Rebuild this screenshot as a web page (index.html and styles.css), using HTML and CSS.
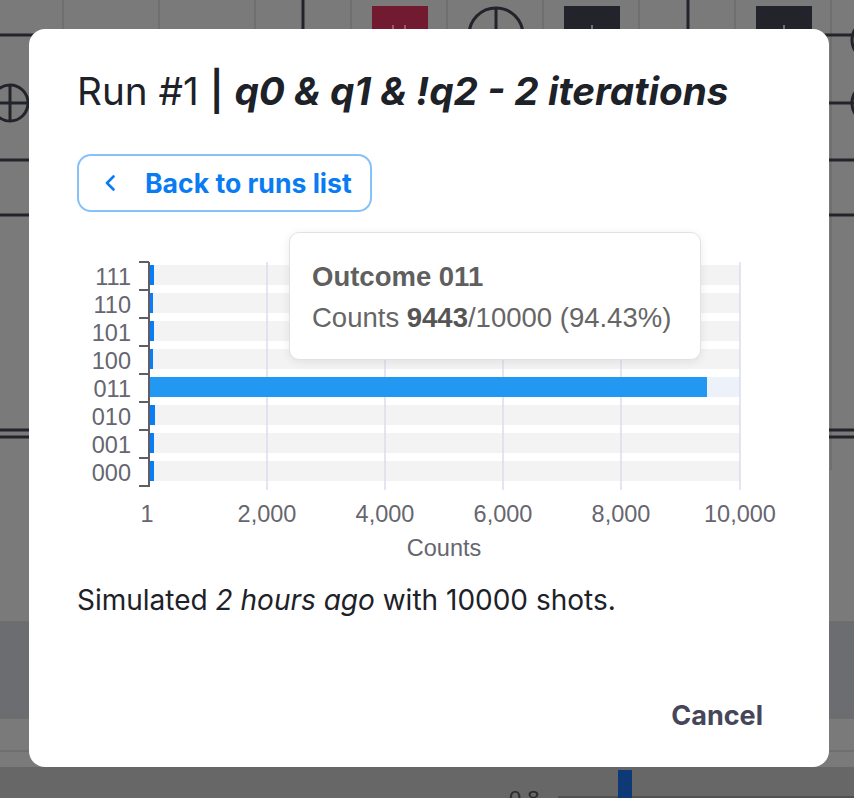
FILE: index.html
```html
<!DOCTYPE html>
<html lang="en">
<head>
<meta charset="utf-8">
<title>Run #1</title>
<link rel="stylesheet" href="styles.css">
</head>
<body>
<div class="app">
  <svg class="circuit" width="854" height="798" viewBox="0 0 854 798">
    <rect x="0" y="0" width="854" height="798" fill="#7a7a7a"/>
    <rect x="0" y="622" width="854" height="96" fill="#6b6d71"/>
    <rect x="0" y="767" width="854" height="31" fill="#676767"/>
    <g stroke="#6c6c6c" stroke-width="1.5">
      <line x1="63" y1="0" x2="63" y2="470"/><line x1="159" y1="0" x2="159" y2="470"/>
      <line x1="255" y1="0" x2="255" y2="470"/><line x1="351" y1="0" x2="351" y2="470"/>
      <line x1="447" y1="0" x2="447" y2="470"/><line x1="543" y1="0" x2="543" y2="470"/>
      <line x1="639" y1="0" x2="639" y2="470"/><line x1="735" y1="0" x2="735" y2="470"/>
      <line x1="831" y1="0" x2="831" y2="470"/>
      <line x1="0" y1="622" x2="854" y2="622"/><line x1="0" y1="718" x2="854" y2="718"/>
      <line x1="0" y1="751" x2="854" y2="751"/>
    </g>
    <g stroke="#23242b" stroke-width="3" fill="none">
      <line x1="0" y1="35" x2="854" y2="35"/>
      <line x1="0" y1="103" x2="854" y2="103"/>
      <line x1="0" y1="160" x2="854" y2="160"/>
      <line x1="0" y1="215" x2="854" y2="215"/>
      <line x1="0" y1="430" x2="854" y2="430"/>
      <line x1="0" y1="437" x2="854" y2="437"/>
      <circle cx="496" cy="35" r="27"/>
      <line x1="496" y1="8" x2="496" y2="62"/>
      <line x1="303" y1="0" x2="303" y2="35"/>
      <line x1="688" y1="0" x2="688" y2="35"/>
      <circle cx="10" cy="103" r="18"/>
      <line x1="10" y1="85" x2="10" y2="121"/>
      <circle cx="872" cy="40" r="20"/>
      <circle cx="872" cy="103" r="20"/>
    </g>
    <circle cx="303" cy="35" r="6" fill="#23242b"/>
    <circle cx="688" cy="35" r="6" fill="#23242b"/>
    <rect x="372" y="6" width="56" height="58" fill="#721b30"/>
    <rect x="564" y="6" width="56" height="58" fill="#23242b"/>
    <rect x="756" y="6" width="56" height="58" fill="#23242b"/>
    <g stroke="#9a5a6a" stroke-width="2">
      <line x1="393" y1="25" x2="393" y2="44"/><line x1="405" y1="25" x2="405" y2="44"/>
    </g>
    <g stroke="#6d6e75" stroke-width="2">
      <line x1="592" y1="25" x2="592" y2="44"/><line x1="784" y1="25" x2="784" y2="44"/>
    </g>
    <line x1="558" y1="797" x2="854" y2="797" stroke="#4a4a4a" stroke-width="1.5"/>
    <rect x="618" y="770" width="14" height="28" fill="#0d3a76"/>
    <text x="509" y="806" class="bg-label">0.8</text>
  </svg>
</div>

<div class="backdrop">
  <div class="modal">
    <h1 class="title">Run #1 <b class="pipe">|</b> <span class="title-em">q0 &amp; q1 &amp; !q2 - 2 iterations</span></h1>

    <button class="back-btn" type="button">
      <svg class="chev" width="12" height="16" viewBox="0 0 12 16"><path d="M9.5 1.5 L3 8 L9.5 14.5" fill="none" stroke="#0a7cf3" stroke-width="2.6" stroke-linecap="round" stroke-linejoin="round"/></svg>
      <span>Back to runs list</span>
    </button>

    <div class="chart">
      <svg class="chart-svg" width="704" height="340" viewBox="0 0 704 340">
        <g fill="#f3f3f3">
          <rect x="72" y="40" width="591" height="20"/>
          <rect x="72" y="68" width="591" height="20"/>
          <rect x="72" y="96" width="591" height="20"/>
          <rect x="72" y="124" width="591" height="20"/>
          <rect x="72" y="180" width="591" height="20"/>
          <rect x="72" y="208" width="591" height="20"/>
          <rect x="72" y="236" width="591" height="20"/>
        </g>
        <rect x="72" y="152" width="591" height="20" fill="#edf1f9"/>
        <g stroke="#dcdcee" stroke-width="1.5">
          <line x1="190" y1="37" x2="190" y2="265"/>
          <line x1="308" y1="37" x2="308" y2="265"/>
          <line x1="426" y1="37" x2="426" y2="265"/>
          <line x1="544" y1="37" x2="544" y2="265"/>
          <line x1="663" y1="37" x2="663" y2="265"/>
        </g>
        <g fill="#0a7cf5">
          <rect x="72" y="40" width="5" height="20"/>
          <rect x="72" y="68" width="4" height="20"/>
          <rect x="72" y="96" width="5" height="20"/>
          <rect x="72" y="124" width="4" height="20"/>
          <rect x="72" y="180" width="6" height="20"/>
          <rect x="72" y="208" width="5" height="20"/>
          <rect x="72" y="236" width="5" height="20"/>
        </g>
        <rect x="72" y="152" width="558" height="20" fill="#2398f3"/>
        <g stroke="#5e5e66" stroke-width="2">
          <line x1="72" y1="37" x2="72" y2="262"/>
          <line x1="62" y1="37" x2="72" y2="37"/><line x1="62" y1="65" x2="72" y2="65"/>
          <line x1="62" y1="93" x2="72" y2="93"/><line x1="62" y1="121" x2="72" y2="121"/>
          <line x1="62" y1="149" x2="72" y2="149"/><line x1="62" y1="177" x2="72" y2="177"/>
          <line x1="62" y1="205" x2="72" y2="205"/><line x1="62" y1="233" x2="72" y2="233"/>
          <line x1="62" y1="261" x2="72" y2="261"/>
        </g>
        <g class="ax-label" text-anchor="end">
          <text x="54" y="59.5">111</text><text x="54" y="87.5">110</text>
          <text x="54" y="115.5">101</text><text x="54" y="143.5">100</text>
          <text x="54" y="171.5">011</text><text x="54" y="199.5">010</text>
          <text x="54" y="227.5">001</text><text x="54" y="255.5">000</text>
        </g>
        <g class="ax-label" text-anchor="middle">
          <text x="70" y="297">1</text>
          <text x="190" y="297">2,000</text>
          <text x="308" y="297">4,000</text>
          <text x="426" y="297">6,000</text>
          <text x="544" y="297">8,000</text>
          <text x="663" y="297">10,000</text>
          <text x="367" y="331">Counts</text>
        </g>
      </svg>
      <div class="tooltip">
        <div class="tip-title">Outcome 011</div>
        <div class="tip-body">Counts <b>9443</b>/10000 (94.43%)</div>
      </div>
    </div>

    <p class="summary">Simulated <em>2 hours ago</em> with 10000 shots.</p>

    <div class="footer">
      <button class="cancel-btn" type="button">Cancel</button>
    </div>
  </div>
</div>
</body>
</html>
```

FILE: styles.css
```css
html, body {
  margin: 0;
  padding: 0;
  width: 854px;
  height: 798px;
  overflow: hidden;
  font-family: Inter, "Noto Sans", sans-serif;
}

.app {
  width: 854px;
  height: 798px;
}

.circuit {
  display: block;
}

.bg-label {
  font-family: "Liberation Sans", Arial, sans-serif;
  font-size: 22px;
  fill: #2a2a2c;
}

.backdrop {
  position: fixed;
  inset: 0;
  display: flex;
  align-items: flex-start;
  justify-content: flex-start;
  padding: 29px 0 0 29px;
}

.modal {
  box-sizing: border-box;
  width: 800px;
  height: 738px;
  background: #ffffff;
  border-radius: 16px;
  padding: 39px 48px 24px;
  display: flex;
  flex-direction: column;
}

.title {
  margin: 0;
  font-family: Inter, sans-serif;
  font-size: 38.7px;
  line-height: 46px;
  font-weight: 400;
  color: #1d2128;
  white-space: nowrap;
}

.pipe {
  font-weight: 600;
}

.title-em {
  font-weight: 700;
  font-style: italic;
}

.back-btn {
  margin-top: 40px;
  align-self: flex-start;
  box-sizing: border-box;
  height: 58px;
  display: flex;
  align-items: center;
  gap: 29px;
  padding: 0 18px 0 25px;
  background: #ffffff;
  border: 2px solid #86c1fa;
  border-radius: 14px;
  font-family: Inter, sans-serif;
  font-size: 26.6px;
  line-height: 54px;
  font-weight: 700;
  color: #0a7cf3;
}

.chev {
  display: block;
}

.chart {
  position: relative;
  margin-top: 13px;
  width: 704px;
  height: 340px;
}

.chart-svg {
  display: block;
}

.ax-label {
  font-family: "Liberation Sans", Arial, sans-serif;
  font-size: 23.5px;
  fill: #666670;
}

.tooltip {
  position: absolute;
  left: 212px;
  top: 7px;
  box-sizing: border-box;
  width: 412px;
  height: 128px;
  padding: 29px 22px 0;
  background: #ffffff;
  border: 1px solid #e2e2e2;
  border-radius: 10px;
  box-shadow: 0 2px 10px rgba(0, 0, 0, 0.08);
  font-family: "Liberation Sans", Arial, sans-serif;
  font-size: 27.5px;
  line-height: 30px;
  color: #666666;
  white-space: nowrap;
}

.tip-title {
  font-weight: 700;
  color: #5f5f5f;
}

.tip-body {
  margin-top: 11px;
}

.tip-body b {
  color: #555555;
}

.summary {
  margin: 18px 0 0;
  font-family: Inter, sans-serif;
  font-size: 28px;
  line-height: 34px;
  color: #1d2128;
}

.summary em {
  font-style: italic;
}

.footer {
  margin-top: auto;
  display: flex;
  justify-content: flex-end;
}

.cancel-btn {
  background: none;
  border: 0;
  padding: 10px 18px;
  font-family: Inter, sans-serif;
  font-size: 27px;
  line-height: 34px;
  font-weight: 700;
  color: #45465a;
}
```
